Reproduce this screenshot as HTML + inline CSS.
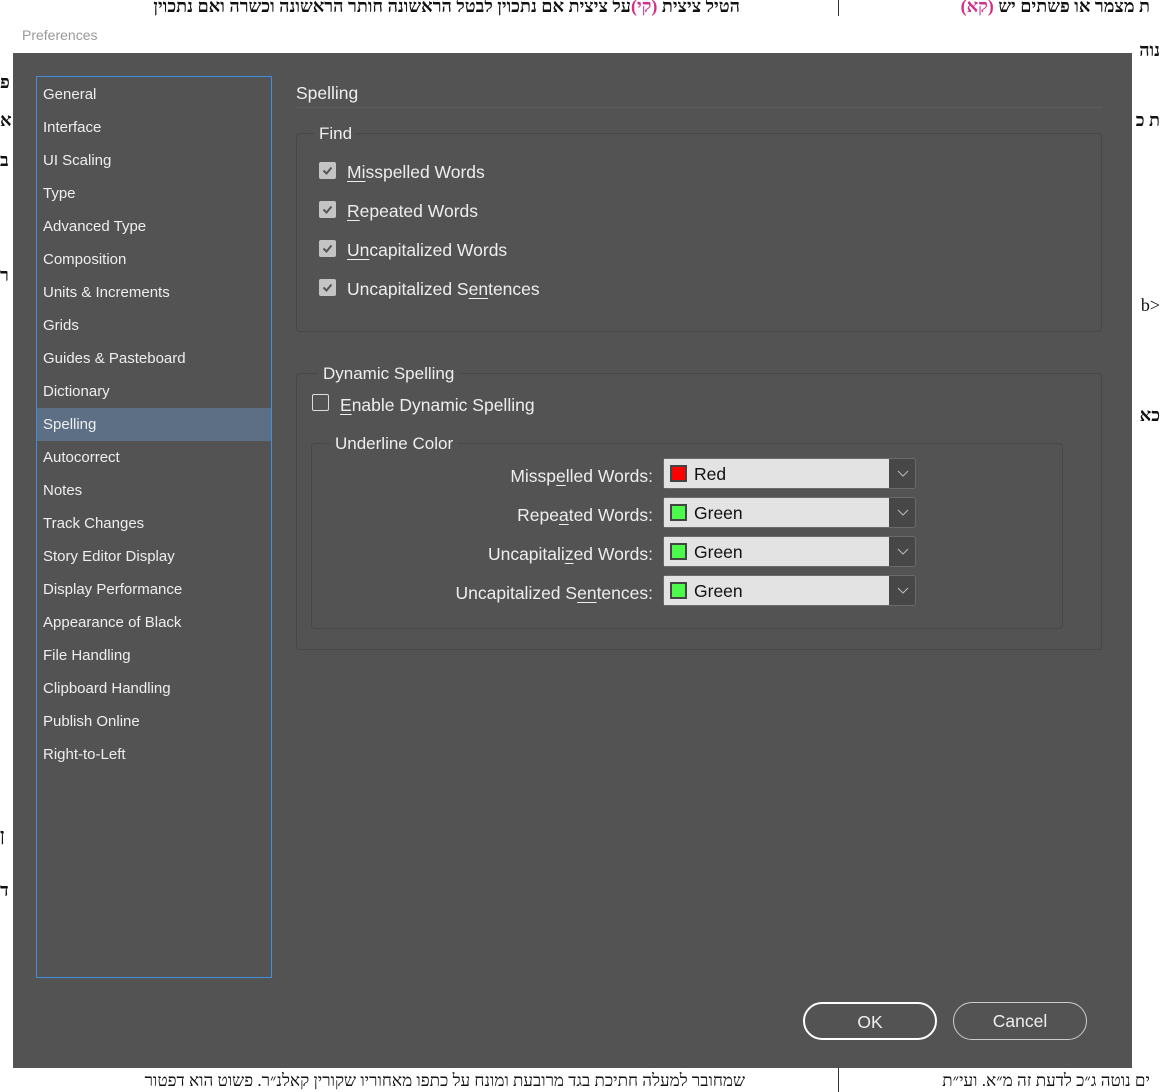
<!DOCTYPE html>
<html><head><meta charset="utf-8"><style>
*{box-sizing:border-box;margin:0;padding:0}
body{width:1160px;height:1092px;background:#fff;position:relative;overflow:hidden;font-family:"Liberation Sans","DejaVu Sans",sans-serif;}
.heb{position:absolute;font-family:"Liberation Serif",serif;font-size:18px;font-weight:bold;color:#111;white-space:nowrap;direction:rtl}
#dlg{position:absolute;left:13px;top:16px;width:1119px;height:1052px;background:#535353;}
#title{height:37px;background:#fff;color:#999;font-size:14px;padding:11px 0 0 9px}
.a{position:absolute;color:#eee;font-size:15px;white-space:nowrap}
#side{position:absolute;left:23px;top:60px;width:236px;height:902px;border:1px solid #3f8fdc;padding-top:1px}
#side div{height:33px;line-height:33px;padding-left:6px;color:#eee;font-size:15px}
#side .sel{background:#5d6f84}
.grp{position:absolute;border:1px solid #474747;border-radius:4px}
.gt{position:absolute;background:#535353;padding:0 5px;color:#eee;font-size:17px;line-height:20px}
.cb{position:absolute;width:17px;height:17px;background:#c4c4c4;border-radius:2px}
.cb svg{position:absolute;left:3px;top:3px}
.lbl{position:absolute;font-size:17.5px;color:#eee;white-space:nowrap}
.dd{position:absolute;left:650px;width:253px;height:31px;border:1px solid #6a6a6a;border-radius:3px;background:#474747}
.dd .f{position:absolute;left:0;top:0;width:225px;height:29px;background:#e3e3e3;color:#111;font-size:17.5px;line-height:31px;padding-left:30px}
.dd .sw{position:absolute;left:6px;top:6px;width:17px;height:17px;border:2px solid #444}
.dd svg{position:absolute;left:233px;top:11px}
.rl{position:absolute;right:479px;font-size:17.5px;color:#eee;white-space:nowrap;text-align:right}
u{text-decoration:underline;text-underline-offset:3px}
.btn{position:absolute;top:986px;width:134px;height:38px;border-radius:19px;color:#eee;font-size:17.5px;text-align:center;line-height:36px}
</style></head><body>
<div class="heb" style="right:420px;top:-4px">הטיל ציצית <span style="color:#d0308a">(קי)</span>על ציצית אם נתכוין לבטל הראשונה חותר הראשונה וכשרה ואם נתכוין</div>
<div class="heb" style="right:10px;top:-4px">ת מצמר או פשתים יש <span style="color:#d0308a">(קא)</span></div>
<div class="heb" style="right:415px;top:1071px;font-weight:normal;font-size:17px">שמחובר למעלה חתיכת בגד מרובעת ומונח על כתפו מאחוריו שקורין קאלנ״ר. פשוט הוא דפטור</div>
<div class="heb" style="right:10px;top:1071px;font-weight:normal;font-size:17px">ים נוטה ג״כ לדעת זה מ״א. ועי״ת</div>
<div style="position:absolute;left:838px;top:0;width:1px;height:16px;background:#333"></div>
<div style="position:absolute;left:838px;top:1068px;width:1px;height:24px;background:#333"></div>
<div class="heb" style="right:0;top:40px;font-size:18px">נוה</div>
<div class="heb" style="right:0;top:110px">ת כ</div>
<div class="heb" style="right:0;top:295px;font-weight:normal">&lt;b</div>
<div class="heb" style="right:0;top:405px">כא</div>
<div class="heb" style="left:0;top:72px">פ</div>
<div class="heb" style="left:0;top:110px">א</div>
<div class="heb" style="left:0;top:150px">ב</div>
<div class="heb" style="left:0;top:265px">ר</div>
<div class="heb" style="left:0;top:825px">ן</div>
<div class="heb" style="left:0;top:880px">ד</div>

<div id="dlg">
<div id="title">Preferences</div>
<div id="side">
<div>General</div><div>Interface</div><div>UI Scaling</div><div>Type</div><div>Advanced Type</div><div>Composition</div><div>Units &amp; Increments</div><div>Grids</div><div>Guides &amp; Pasteboard</div><div>Dictionary</div><div class="sel">Spelling</div><div>Autocorrect</div><div>Notes</div><div>Track Changes</div><div>Story Editor Display</div><div>Display Performance</div><div>Appearance of Black</div><div>File Handling</div><div>Clipboard Handling</div><div>Publish Online</div><div>Right-to-Left</div>
</div>
<div class="a" style="left:283px;top:67px;font-size:17.5px">Spelling</div>
<div style="position:absolute;left:283px;top:91px;width:806px;height:1px;background:#5e5e5e"></div>

<div class="grp" style="left:283px;top:117px;width:806px;height:199px"></div>
<div class="gt" style="left:301px;top:108px">Find</div>
<div class="cb" style="left:306px;top:146px"><svg width="11" height="11"><path d="M1.5 5.5l3 3 5-6" stroke="#555" stroke-width="2" fill="none"/></svg></div>
<div class="lbl" style="left:334px;top:146px"><u>Mi</u>sspelled Words</div>
<div class="cb" style="left:306px;top:185px"><svg width="11" height="11"><path d="M1.5 5.5l3 3 5-6" stroke="#555" stroke-width="2" fill="none"/></svg></div>
<div class="lbl" style="left:334px;top:185px"><u>R</u>epeated Words</div>
<div class="cb" style="left:306px;top:224px"><svg width="11" height="11"><path d="M1.5 5.5l3 3 5-6" stroke="#555" stroke-width="2" fill="none"/></svg></div>
<div class="lbl" style="left:334px;top:224px"><u>Un</u>capitalized Words</div>
<div class="cb" style="left:306px;top:263px"><svg width="11" height="11"><path d="M1.5 5.5l3 3 5-6" stroke="#555" stroke-width="2" fill="none"/></svg></div>
<div class="lbl" style="left:334px;top:263px">Uncapitalized S<u>en</u>tences</div>

<div class="grp" style="left:283px;top:357px;width:806px;height:277px"></div>
<div class="gt" style="left:305px;top:348px">Dynamic Spelling</div>
<div style="position:absolute;left:299px;top:378px;width:17px;height:17px;border:1px solid #ddd;border-radius:2px"></div>
<div class="lbl" style="left:327px;top:379px"><u>E</u>nable Dynamic Spelling</div>

<div class="grp" style="left:298px;top:427px;width:752px;height:186px"></div>
<div class="gt" style="left:317px;top:418px">Underline Color</div>

<div class="rl" style="top:450px">Missp<u>e</u>lled Words:</div>
<div class="dd" style="top:442px"><div class="f"><div class="sw" style="background:#f00"></div>Red</div><svg width="12" height="8"><path d="M1 1l5 5 5-5" stroke="#bbb" fill="none"/></svg></div>
<div class="rl" style="top:489px">Repe<u>a</u>ted Words:</div>
<div class="dd" style="top:481px"><div class="f"><div class="sw" style="background:#4cfa4c"></div>Green</div><svg width="12" height="8"><path d="M1 1l5 5 5-5" stroke="#bbb" fill="none"/></svg></div>
<div class="rl" style="top:528px">Uncapitali<u>z</u>ed Words:</div>
<div class="dd" style="top:520px"><div class="f"><div class="sw" style="background:#4cfa4c"></div>Green</div><svg width="12" height="8"><path d="M1 1l5 5 5-5" stroke="#bbb" fill="none"/></svg></div>
<div class="rl" style="top:567px">Uncapitalized S<u>en</u>tences:</div>
<div class="dd" style="top:559px"><div class="f"><div class="sw" style="background:#4cfa4c"></div>Green</div><svg width="12" height="8"><path d="M1 1l5 5 5-5" stroke="#bbb" fill="none"/></svg></div>

<div class="btn" style="left:790px;border:2px solid #fff">OK</div>
<div class="btn" style="left:940px;border:1px solid #ccc;line-height:37px">Cancel</div>
</div>
</body></html>
